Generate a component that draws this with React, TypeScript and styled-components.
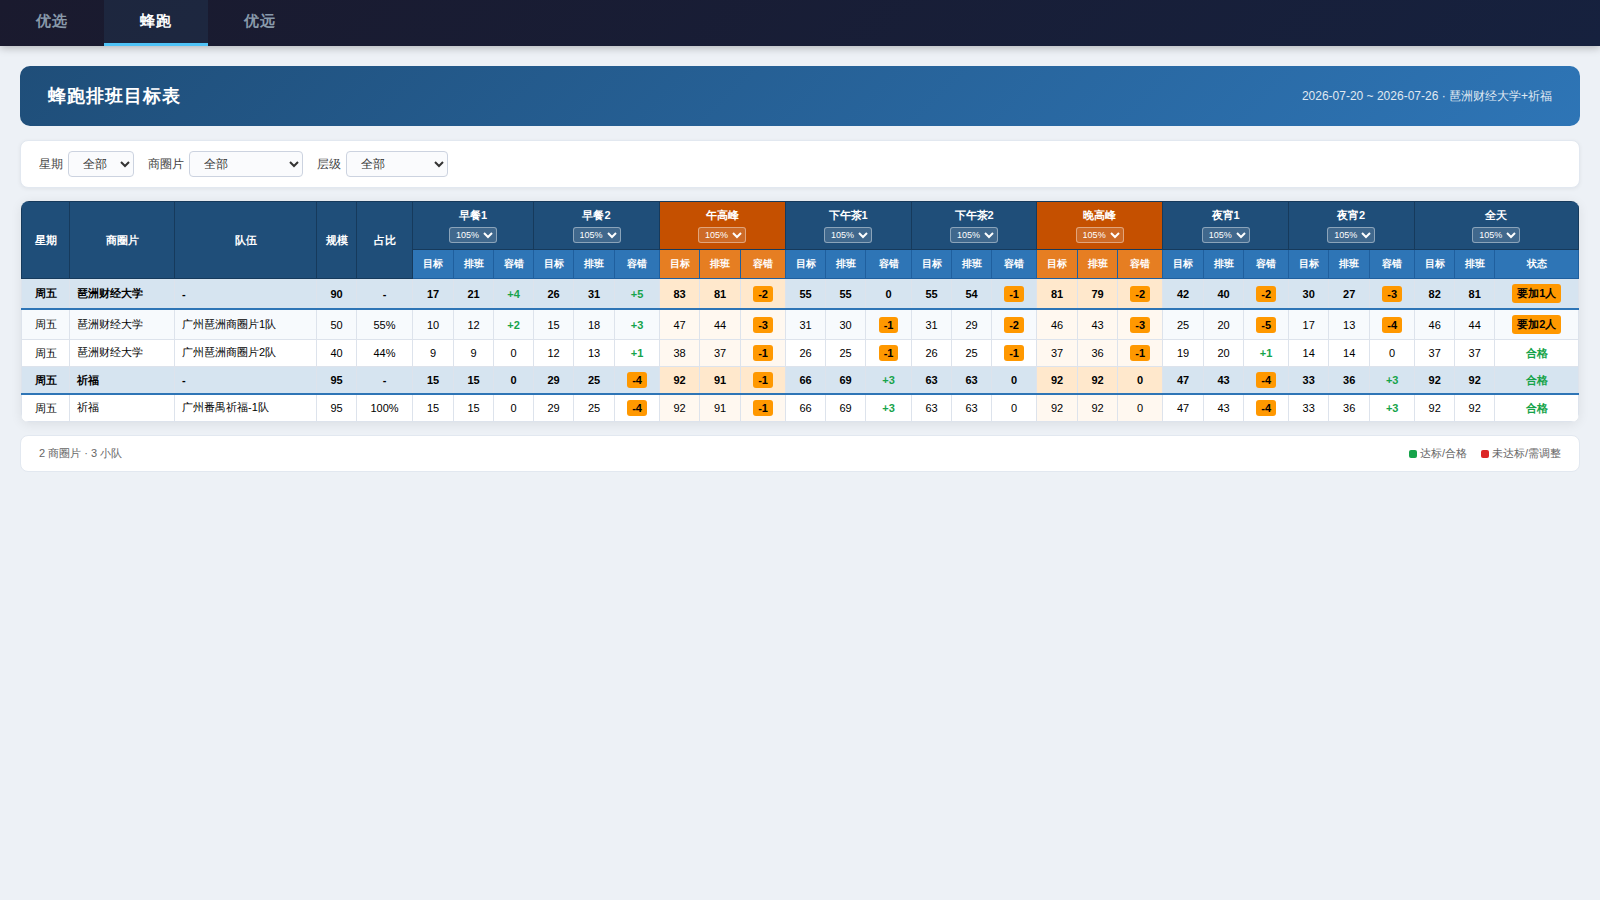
import React from 'react';
import styled, { createGlobalStyle, css } from 'styled-components';

const GlobalStyle = createGlobalStyle`
  * { box-sizing: border-box; margin: 0; padding: 0; }
  body {
    font-family: "Liberation Sans", sans-serif;
    background: #edf1f6;
    font-size: 12px;
    color: #000;
  }
`;

const NavBar = styled.nav`
  display: flex;
  height: 46px;
  background: linear-gradient(135deg, #1a1a2e, #16213e);
  box-shadow: 0 2px 8px rgba(0, 0, 0, 0.25);
`;

const NavTab = styled.button<{ $active?: boolean }>`
  width: 104px;
  border: none;
  border-bottom: 3px solid ${(p) => (p.$active ? '#4fc3f7' : 'transparent')};
  background: ${(p) => (p.$active ? 'rgba(79, 195, 247, 0.08)' : 'transparent')};
  color: ${(p) => (p.$active ? '#fff' : '#8899aa')};
  font-family: inherit;
  font-size: 15px;
  font-weight: 600;
  letter-spacing: 1px;
`;

const Page = styled.main`
  display: flex;
  flex-direction: column;
  gap: 14px;
  padding: 20px;
`;

const Banner = styled.header`
  display: flex;
  align-items: center;
  justify-content: space-between;
  height: 60px;
  padding: 0 28px;
  border-radius: 10px;
  background: linear-gradient(135deg, #1f4e79, #2e75b6);
  color: #fff;
`;

const Title = styled.h1`
  font-size: 18px;
  font-weight: 700;
  letter-spacing: 1px;
`;

const Period = styled.span`
  font-size: 12px;
  opacity: 0.85;
`;

const Filters = styled.section`
  display: flex;
  align-items: center;
  gap: 14px;
  height: 48px;
  padding: 0 18px;
  border: 1px solid #e2e8f0;
  border-radius: 8px;
  background: #fff;
  box-shadow: 0 1px 4px rgba(0, 0, 0, 0.06);
`;

const Field = styled.label`
  display: flex;
  align-items: center;
  gap: 5px;
  font-size: 12px;
  color: #444;
`;

const FilterSelect = styled.select<{ $width: number }>`
  width: ${(p) => p.$width}px;
  height: 26px;
  padding: 0 10px;
  border: 1px solid #ccd3e0;
  border-radius: 4px;
  background: #fafbfd;
  color: #333;
  font-family: inherit;
  font-size: 12px;
`;

const TableCard = styled.section`
  width: 1558px;
  margin: -1px auto;
  border-radius: 8px;
  overflow: hidden;
  background: #fff;
  box-shadow: 0 2px 12px rgba(0, 0, 0, 0.08);
`;

const Table = styled.table`
  width: 1558px;
  table-layout: fixed;
  border-collapse: collapse;
  font-size: 11px;
`;

const HeadCell = styled.th<{ $peak?: boolean }>`
  border: 1px solid #163a5c;
  background: ${(p) => (p.$peak ? '#c55000' : '#1f4e79')};
  color: #fff;
  font-size: 11px;
  font-weight: 700;
  text-align: center;
  vertical-align: middle;
`;

const SubHeadCell = styled.th<{ $peak?: boolean }>`
  border: 1px solid #1f5f9e;
  background: ${(p) => (p.$peak ? '#e67e22' : '#2e75b6')};
  color: #fff;
  font-size: 10px;
  font-weight: 700;
`;

const SlotHead = styled.div<{ $nudge?: boolean }>`
  display: flex;
  flex-direction: column;
  align-items: center;
  gap: 4px;
  padding: 0 ${(p) => (p.$nudge ? 1 : 0)}px 1px 0;
`;

const RateSelect = styled.select`
  width: 48px;
  height: 16px;
  padding: 0 0 0 2px;
  border: 1px solid rgba(255, 255, 255, 0.4);
  border-radius: 3px;
  background: rgba(255, 255, 255, 0.15);
  color: #fff;
  font-family: inherit;
  font-size: 9px;
`;

const HeadRow = styled.tr<{ $height: number }>`
  height: ${(p) => p.$height}px;
`;

const BodyRow = styled.tr<{ $height: number; $summary?: boolean; $striped?: boolean }>`
  height: ${(p) => p.$height}px;
  background: ${(p) => (p.$summary ? '#d6e4f0' : p.$striped ? '#f7fafd' : '#fff')};
  ${(p) =>
    p.$summary &&
    css`
      font-weight: 700;
      td { border-bottom: 2px solid #2e75b6; }
    `}
`;

const Cell = styled.td<{ $left?: boolean; $tint?: string; $top?: number; $bottom?: number }>`
  border: 1px solid #dde3ec;
  padding: ${(p) => p.$top ?? 0}px ${(p) => (p.$left ? 7 : 0)}px ${(p) => p.$bottom ?? 0}px;
  text-align: ${(p) => (p.$left ? 'left' : 'center')};
  vertical-align: middle;
  background: ${(p) => p.$tint || 'transparent'};
`;

const Good = styled.span`
  color: #16a34a;
  font-weight: 700;
`;

const Warn = styled.span`
  display: inline-block;
  padding: 2px 5px;
  border-radius: 3px;
  background: #ff9800;
  color: #000;
  font-weight: 700;
`;

const Footer = styled.footer`
  display: flex;
  align-items: center;
  justify-content: space-between;
  height: 37px;
  padding: 0 18px 1px;
  border: 1px solid #e2e8f0;
  border-radius: 8px;
  background: #fff;
  color: #666;
  font-size: 11px;
`;

const Legend = styled.div`
  display: flex;
  gap: 14px;
`;

const LegendItem = styled.span`
  display: flex;
  align-items: center;
  gap: 3px;
`;

const Swatch = styled.i<{ $color: string }>`
  width: 8px;
  height: 8px;
  margin-top: 1px;
  border-radius: 2px;
  background: ${(p) => p.$color};
`;

const COLUMN_WIDTHS = [
  48, 105, 142, 40, 56,
  41, 40, 40, 40, 41, 45, 40, 41, 45,
  40, 40, 46, 40, 40, 45, 41, 40, 45,
  41, 40, 45, 40, 41, 45, 40, 40, 84,
];

const FIXED = ['星期', '商圈片', '队伍', '规模', '占比'];
const SLOTS = ['早餐1', '早餐2', '午高峰', '下午茶1', '下午茶2', '晚高峰', '夜宵1', '夜宵2', '全天'];
const isPeak = (slot: number) => slot === 2 || slot === 5;

interface Row {
  height: number;
  /* Top padding of the numeric cells and of the Chinese text cells. */
  top?: number;
  textTop?: number;
  /* Bottom padding of the name cells. */
  nameBottom?: number;
  summary?: boolean;
  striped?: boolean;
  info: string[];
  values: string;
}

const ROWS: Row[] = [
  { height: 30, top: 1, summary: true, info: ['周五', '琶洲财经大学', '-', '90', '-'],
    values: '17 21 +4 26 31 +5 83 81 -2 55 55 0 55 54 -1 81 79 -2 42 40 -2 30 27 -3 82 81 要加1人' },
  { height: 31, top: 1, textTop: 1, striped: true, info: ['周五', '琶洲财经大学', '广州琶洲商圈片1队', '50', '55%'],
    values: '10 12 +2 15 18 +3 47 44 -3 31 30 -1 31 29 -2 46 43 -3 25 20 -5 17 13 -4 46 44 要加2人' },
  { height: 27, nameBottom: 1, info: ['周五', '琶洲财经大学', '广州琶洲商圈片2队', '40', '44%'],
    values: '9 9 0 12 13 +1 38 37 -1 26 25 -1 26 25 -1 37 36 -1 19 20 +1 14 14 0 37 37 合格' },
  { height: 27, textTop: 1, summary: true, info: ['周五', '祈福', '-', '95', '-'],
    values: '15 15 0 29 25 -4 92 91 -1 66 69 +3 63 63 0 92 92 0 47 43 -4 33 36 +3 92 92 合格' },
  { height: 28, textTop: 1, nameBottom: 1, info: ['周五', '祈福', '广州番禺祈福-1队', '95', '100%'],
    values: '15 15 0 29 25 -4 92 91 -1 66 69 +3 63 63 0 92 92 0 47 43 -4 33 36 +3 92 92 合格' },
];

function Value({ text }: { text: string }) {
  if (text.startsWith('+') || text === '合格') return <Good>{text}</Good>;
  if (text.startsWith('-') || text.startsWith('要')) return <Warn>{text}</Warn>;
  return <>{text}</>;
}

function Filter({ label, width }: { label: string; width: number }) {
  return (
    <Field>
      {label}
      <FilterSelect $width={width}><option>全部</option></FilterSelect>
    </Field>
  );
}

export default function App() {
  return (
    <>
      <GlobalStyle />
      <NavBar>
        <NavTab>优选</NavTab>
        <NavTab $active>蜂跑</NavTab>
        <NavTab>优远</NavTab>
      </NavBar>
      <Page>
        <Banner>
          <Title>蜂跑排班目标表</Title>
          <Period>2026-07-20 ~ 2026-07-26 · 琶洲财经大学+祈福</Period>
        </Banner>
        <Filters>
          <Filter label="星期" width={66} />
          <Filter label="商圈片" width={114} />
          <Filter label="层级" width={102} />
        </Filters>
        <TableCard>
          <Table>
            <colgroup>
              {COLUMN_WIDTHS.map((w, i) => <col key={i} width={w} />)}
            </colgroup>
            <thead>
              <HeadRow $height={48}>
                {FIXED.map((name) => <HeadCell key={name} rowSpan={2}>{name}</HeadCell>)}
                {SLOTS.map((name, i) => (
                  <HeadCell key={name} colSpan={3} $peak={isPeak(i)}>
                    <SlotHead $nudge={[2, 3, 7, 8].includes(i)}>
                      {name}
                      <RateSelect><option>105%</option></RateSelect>
                    </SlotHead>
                  </HeadCell>
                ))}
              </HeadRow>
              <HeadRow $height={29}>
                {SLOTS.map((slot, i) =>
                  ['目标', '排班', i === 8 ? '状态' : '容错'].map((name) => (
                    <SubHeadCell key={slot + name} $peak={isPeak(i)}>{name}</SubHeadCell>
                  )),
                )}
              </HeadRow>
            </thead>
            <tbody>
              {ROWS.map((row, r) => (
                <BodyRow key={r} $height={row.height} $summary={row.summary} $striped={row.striped}>
                  {row.info.map((text, i) => {
                    const isName = i === 1 || i === 2;
                    const isText = i < 3 && text !== '-';
                    return (
                      <Cell
                        key={i}
                        $left={isName}
                        $top={isName && row.nameBottom ? 0 : isText ? row.textTop : row.top}
                        $bottom={isName ? row.nameBottom : 0}
                      >
                        {text}
                      </Cell>
                    );
                  })}
                  {row.values.split(' ').map((text, i) => (
                    <Cell
                      key={i}
                      $top={text.startsWith('要') ? 0 : text === '合格' ? row.textTop : row.top}
                      $tint={isPeak(Math.floor(i / 3)) ? (row.summary ? '#ffe8cc' : '#fff8f0') : undefined}
                    >
                      <Value text={text} />
                    </Cell>
                  ))}
                </BodyRow>
              ))}
            </tbody>
          </Table>
        </TableCard>
        <Footer>
          <span>2 商圈片 · 3 小队</span>
          <Legend>
            <LegendItem><Swatch $color="#16a34a" />达标/合格</LegendItem>
            <LegendItem><Swatch $color="#dc2626" />未达标/需调整</LegendItem>
          </Legend>
        </Footer>
      </Page>
    </>
  );
}
